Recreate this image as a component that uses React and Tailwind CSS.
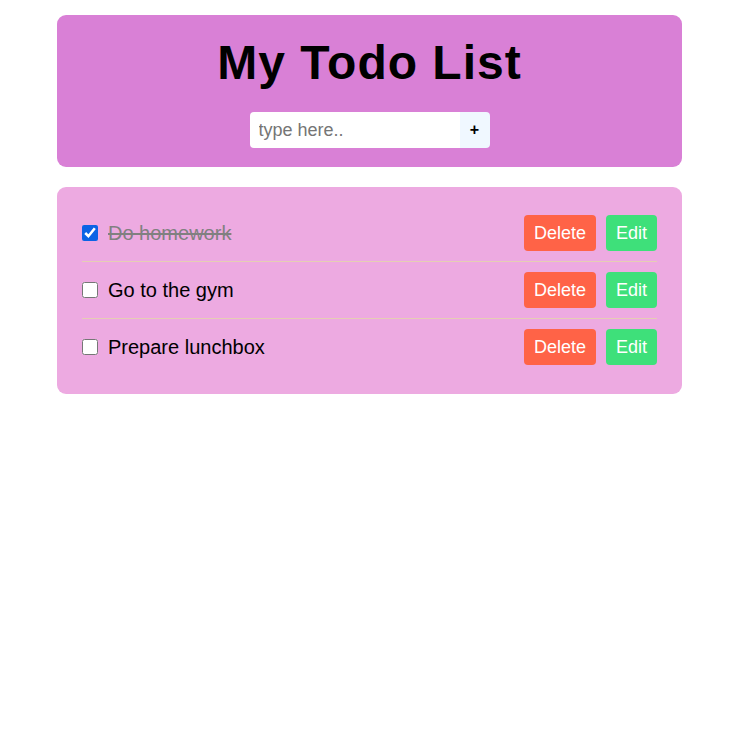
import React, { useState } from 'react'

const INITIAL = [
  { id: 1, text: 'Do homework', done: true },
  { id: 2, text: 'Go to the gym', done: false },
  { id: 3, text: 'Prepare lunchbox', done: false },
]

export default function App() {
  const [todos, setTodos] = useState(INITIAL)
  const [input, setInput] = useState('')

  const addTodo = () => {
    const text = input.trim()
    if (!text) return
    setTodos((prev) => [...prev, { id: Date.now(), text, done: false }])
    setInput('')
  }

  const toggle = (id) =>
    setTodos((prev) => prev.map((t) => (t.id === id ? { ...t, done: !t.done } : t)))

  const remove = (id) => setTodos((prev) => prev.filter((t) => t.id !== id))

  return (
    <div className="min-h-screen bg-white pt-[15px] font-['Liberation_Sans',Arial,sans-serif] text-black">
      <div className="ml-[57px] w-[625px]">
        {/* Header */}
        <div className="rounded-[9px] bg-[#d980d6] pt-[20px] pb-[19px] flex flex-col items-center">
          <h1 className="text-[48px] leading-[55px] font-bold tracking-[1px] mb-[22px]">My Todo List</h1>
          <div className="flex h-[36px]">
            <input
              value={input}
              onChange={(e) => setInput(e.target.value)}
              onKeyDown={(e) => e.key === 'Enter' && addTodo()}
              placeholder="type here.."
              className="w-[210px] h-full rounded-l-[4px] bg-white pl-[9px] text-[18px] text-black placeholder-[#757575] outline-none"
            />
            <button
              onClick={addTodo}
              className="w-[30px] h-full rounded-r-[4px] bg-[#f0f8ff] text-[16px] font-bold"
            >
              +
            </button>
          </div>
        </div>

        {/* List */}
        <div className="mt-[20px] rounded-[9px] bg-[#edaae1] px-[25px] pt-[18px] pb-[19px]">
          {todos.map((todo, i) => (
            <div
              key={todo.id}
              className={`flex items-center justify-between py-[10px] ${
                i < todos.length - 1 ? 'border-b border-[#e6cdb4]' : ''
              }`}
            >
              <label className="flex items-center gap-[10px]">
                <input
                  type="checkbox"
                  checked={todo.done}
                  onChange={() => toggle(todo.id)}
                  className="w-[16px] h-[16px] accent-[#0b63e5]"
                />
                <span
                  className={`text-[20px] ${
                    todo.done ? 'line-through text-[#808080]' : 'text-black'
                  }`}
                >
                  {todo.text}
                </span>
              </label>
              <div className="flex gap-[10px]">
                <button
                  onClick={() => remove(todo.id)}
                  className="h-[36px] px-[10px] rounded-[4px] bg-[#ff6347] text-white text-[18px]"
                >
                  Delete
                </button>
                <button className="h-[36px] px-[10px] rounded-[4px] bg-[#3ee07a] text-white text-[18px]">
                  Edit
                </button>
              </div>
            </div>
          ))}
        </div>
      </div>
    </div>
  )
}
